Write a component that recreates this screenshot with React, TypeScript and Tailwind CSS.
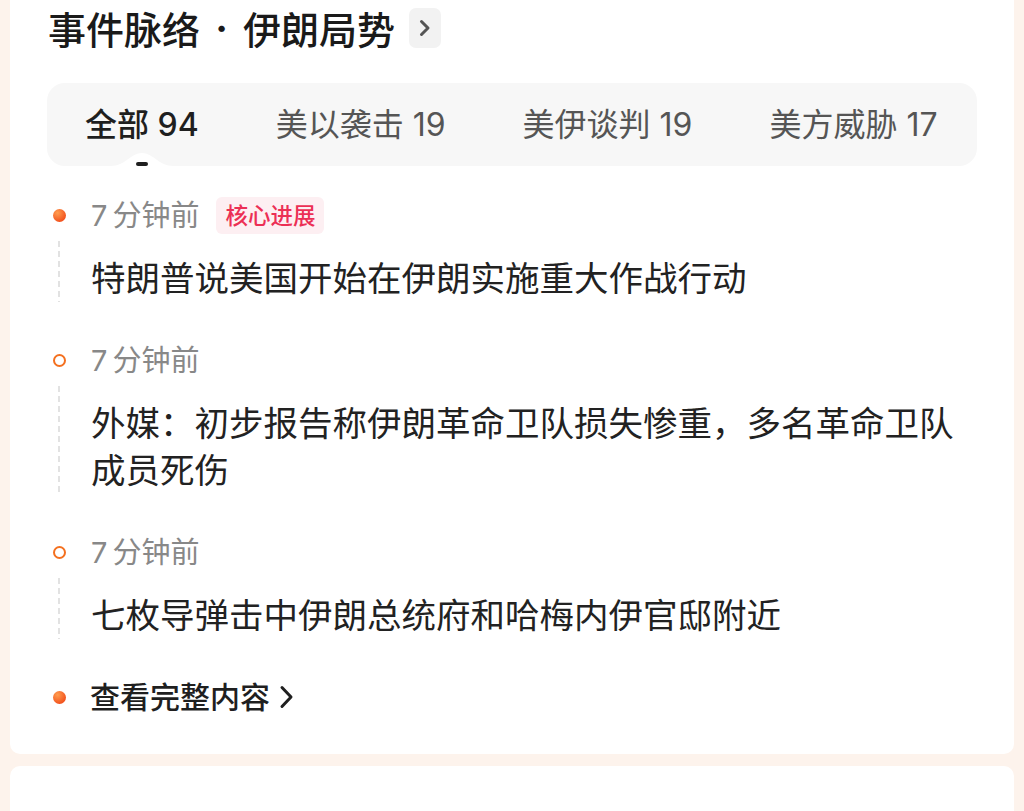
import React from 'react';

const tabs = [
  { label: '全部', count: 94 },
  { label: '美以袭击', count: 19 },
  { label: '美伊谈判', count: 19 },
  { label: '美方威胁', count: 17 },
];

const events = [
  { mins: 7, core: true, text: '特朗普说美国开始在伊朗实施重大作战行动' },
  { mins: 7, core: false, text: '外媒：初步报告称伊朗革命卫队损失惨重，多名革命卫队成员死伤' },
  { mins: 7, core: false, text: '七枚导弹击中伊朗总统府和哈梅内伊官邸附近' },
];

const FilledDot = () => (
  <span className="block w-[13px] h-[13px] rounded-full bg-[radial-gradient(circle_at_35%_30%,#ff9d4f,#f2501c_75%)]" />
);

const HollowDot = () => (
  <span className="block w-[13px] h-[13px] rounded-full border-[2.5px] border-[#f4701f] bg-white" />
);

const DashedLine = () => (
  <span className="absolute left-[11px] top-[46px] bottom-0 w-[2px] bg-[linear-gradient(#e2e2e2_60%,transparent_0)] bg-[length:2px_10px]" />
);

export default function App() {
  return (
    <div className="w-[1024px] h-[811px] overflow-hidden bg-[#fdf3ec] px-[10px] font-['Inter','Noto_Sans_CJK_SC',sans-serif]">
      <div className="bg-white rounded-b-[10px] px-[37px] pb-[37px]">
        {/* title */}
        <div className="h-[56px] flex items-center pl-[1px]">
          <h1 className="flex items-center text-[38px] font-medium text-[#1a1a1a] leading-none font-['Noto_Sans_CJK_SC',sans-serif]">
            事件脉络<span className="w-[43px] text-center font-['Inter',sans-serif] font-bold">·</span>伊朗局势
          </h1>
          <span className="ml-[14px] w-[32px] h-[40px] rounded-[7px] bg-[#f2f2f2] flex items-center justify-center">
            <svg width="14" height="20" viewBox="0 0 14 20" fill="none">
              <path d="M3.5 3.5l6.5 6.5-6.5 6.5" stroke="#555" strokeWidth="3" strokeLinecap="round" strokeLinejoin="round" />
            </svg>
          </span>
        </div>

        {/* tabs */}
        <div className="relative mt-[27px] h-[83px] rounded-[18px] bg-[#f7f7f7] flex items-center pl-[38px] gap-[77px]">
          {tabs.map((t, i) => (
            <div
              key={t.label}
              className={`text-[32px] leading-none whitespace-nowrap ${
                i === 0 ? 'text-[#1f1f1f] font-medium' : 'text-[#555]'
              }`}
            >
              {t.label} {t.count}
            </div>
          ))}
          {/* active indicator */}
          <span className="absolute left-[64px] bottom-0 w-[62px] h-[16px] flex justify-center">
            <svg className="absolute inset-0" width="62" height="16" viewBox="0 0 62 16">
              <path d="M0 16 C14 16 20 3 31 3 C42 3 48 16 62 16 Z" fill="#fff" />
            </svg>
            <span className="absolute top-[12px] w-[12px] h-[4px] rounded-full bg-[#1f1f1f]" />
          </span>
        </div>

        {/* timeline */}
        <div className="mt-[29px]">
          {events.map((e, i) => (
            <div key={i} className="relative grid grid-cols-[44px_1fr] pb-[38px]">
              <div className="relative">
                <div className="h-[40px] flex items-center pl-[6px]">{i === 0 ? <FilledDot /> : <HollowDot />}</div>
                <DashedLine />
              </div>
              <div>
                <div className="h-[40px] flex items-center gap-[17px]">
                  <span className="text-[29px] text-[#888] leading-none">
                    <span className="mr-[5px]">{e.mins}</span>分钟前
                  </span>
                  {e.core && (
                    <span className="h-[37px] px-[9px] rounded-[6px] bg-[#fdeff2] text-[#ec2f55] text-[22.5px] leading-[37px] font-medium">
                      核心进展
                    </span>
                  )}
                </div>
                <p className="mt-[20px] text-[34.5px] leading-[47px] text-[#222] pr-[10px]">{e.text}</p>
              </div>
            </div>
          ))}

          <div className="grid grid-cols-[44px_1fr]">
            <div className="h-[40px] flex items-center pl-[6px]">
              <FilledDot />
            </div>
            <div className="h-[40px] flex items-center gap-[7px] -ml-[1px]">
              <span className="text-[30px] text-[#1f1f1f] font-medium leading-none">查看完整内容</span>
              <svg width="18" height="26" viewBox="0 0 18 26" fill="none">
                <path d="M5 3.5l9 9.5-9 9.5" stroke="#1f1f1f" strokeWidth="3" strokeLinecap="round" strokeLinejoin="round" />
              </svg>
            </div>
          </div>
        </div>
      </div>

      <div className="mt-[12px] h-[200px] bg-white rounded-t-[10px]" />
    </div>
  );
}
